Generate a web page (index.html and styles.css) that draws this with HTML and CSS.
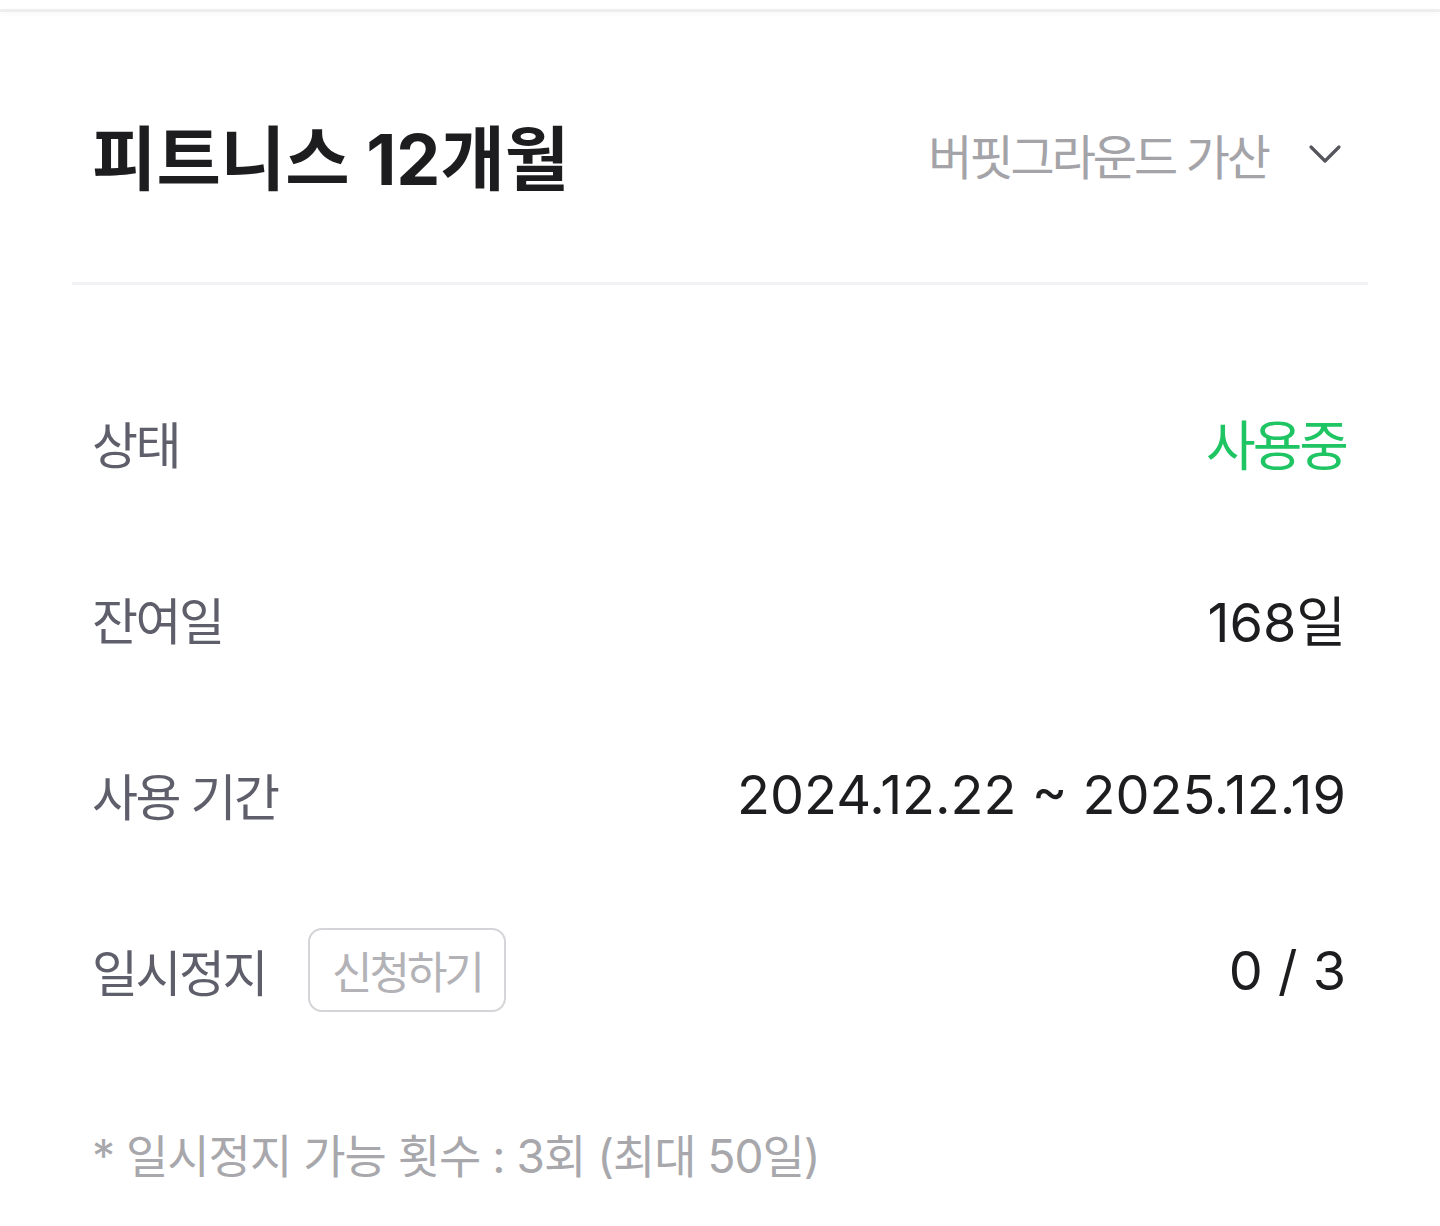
FILE: index.html
```html
<!DOCTYPE html>
<html lang="ko">
<head>
    <meta charset="UTF-8">
    <meta name="viewport" content="width=device-width, initial-scale=1.0">
    <title>이용권 상세</title>
    <link rel="stylesheet" href="styles.css">
</head>
<body>
    <div class="top-line"></div>

    <div class="pass-header">
        <h1 class="pass-title">피트니스 12개월</h1>
        <button class="branch-select">
            <span>버핏그라운드 가산</span>
            <svg width="34" height="26" viewBox="0 0 34 26" fill="none">
                <path d="M3 6 L17 20 L31 6" stroke="#55565c" stroke-width="3.2" stroke-linecap="round" stroke-linejoin="round"/>
            </svg>
        </button>
    </div>

    <div class="divider"></div>

    <div class="info-list">
        <div class="info-row">
            <span class="info-label">상태</span>
            <span class="info-value status-on">사용중</span>
        </div>
        <div class="info-row">
            <span class="info-label">잔여일</span>
            <span class="info-value">168일</span>
        </div>
        <div class="info-row">
            <span class="info-label">사용 기간</span>
            <span class="info-value">2024.12.22 ~ 2025.12.19</span>
        </div>
        <div class="info-row">
            <div class="label-group">
                <span class="info-label">일시정지</span>
                <button class="apply-btn">신청하기</button>
            </div>
            <span class="info-value">0 / 3</span>
        </div>
    </div>

    <p class="pause-note">* 일시정지 가능 횟수 : 3회 (최대 50일)</p>
</body>
</html>
```

FILE: styles.css
```css
* {
    box-sizing: border-box;
    margin: 0;
    padding: 0;
    font-family: "Inter", "Noto Sans CJK KR", sans-serif;
}
body {
    background: #fff;
    width: 1440px;
    height: 1226px;
    overflow: hidden;
}
.top-line {
    margin-top: 9px;
    height: 3px;
    background: #eeeeef;
    box-shadow: 0 2px 4px rgba(0, 0, 0, 0.04);
}
.pass-header {
    display: flex;
    justify-content: space-between;
    align-items: center;
    height: 270px;
    padding: 14px 98px 0 92px;
}
.pass-title {
    font-size: 70px;
    font-weight: 700;
    color: #1d1d1f;
    letter-spacing: 0;
}
.branch-select {
    display: flex;
    align-items: center;
    gap: 40px;
    border: none;
    background: none;
    font-size: 48px;
    color: #a3a3a8;
    letter-spacing: -3px;
}
.divider {
    margin: 0 72px;
    height: 3px;
    background: #f2f2f4;
}
.info-list {
    padding: 69px 94px 0 92px;
}
.info-row {
    display: flex;
    justify-content: space-between;
    align-items: center;
    height: 176px;
}
.label-group {
    display: flex;
    align-items: center;
    gap: 42px;
}
.info-label {
    font-size: 50px;
    color: #5e5f6a;
    letter-spacing: -2.5px;
}
.info-value {
    font-size: 54px;
    color: #1d1d1f;
    letter-spacing: 0;
}
.status-on {
    color: #1fc463;
    letter-spacing: -3px;
}
.apply-btn {
    height: 84px;
    padding: 0 22px;
    border: 2.5px solid #d5d5d9;
    border-radius: 14px;
    background: #fff;
    font-size: 44px;
    color: #b2b2b7;
    letter-spacing: -3px;
}
.pause-note {
    margin-top: 62px;
    padding-left: 92px;
    font-size: 46px;
    color: #a7a7ac;
    letter-spacing: -1px;
}
```
